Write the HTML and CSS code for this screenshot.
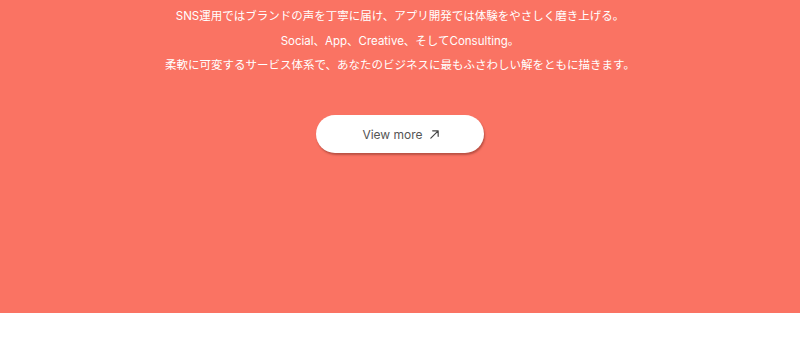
FILE: index.html
```html
<!DOCTYPE html>
<html lang="ja">
<head>
<meta charset="utf-8">
<link rel="stylesheet" href="styles.css">
</head>
<body>
<section class="hero">
  <div class="copy">
    <p class="line">SNS運用ではブランドの声を丁寧に届け、アプリ開発では体験をやさしく磨き上げる。</p>
    <p class="line">Social、App、Creative、そしてConsulting。</p>
    <p class="line">柔軟に可変するサービス体系で、あなたのビジネスに最もふさわしい解をともに描きます。</p>
  </div>
  <a class="btn" href="#">
    <span>View more</span>
    <svg class="arrow" width="11" height="11" viewBox="0 0 12 12" fill="none" stroke="#444" stroke-width="1.3" stroke-linecap="round" stroke-linejoin="round"><path d="M2 10L10 2M4 2H10V8"/></svg>
  </a>
</section>
<div class="after"></div>
</body>
</html>
```

FILE: styles.css
```css
html, body { margin: 0; padding: 0; background: #fff; }
body { font-family: Inter, "Noto Sans CJK JP", sans-serif; }
.hero {
  background: #fa7363;
  height: 313px;
  box-shadow: 0 1px 2px rgba(120, 40, 30, 0.25);
  display: flex;
  flex-direction: column;
  align-items: center;
}
.copy { padding-top: 5px; text-align: center; color: #fff; }
.line { margin: 0; font-size: 11.5px; line-height: 22px; }
.line + .line { margin-top: 3px; }
.line:last-child { margin-top: 2px; }
.btn {
  margin-top: 39px;
  width: 168px;
  height: 38px;
  border-radius: 19px;
  background: #fff;
  display: flex;
  align-items: center;
  justify-content: center;
  gap: 6px;
  text-decoration: none;
  color: #555;
  font-size: 12px;
  box-shadow: 1px 2px 2px rgba(110, 40, 30, 0.45);
}
.btn span { padding-left: 2px; }
.arrow { display: block; }
```
